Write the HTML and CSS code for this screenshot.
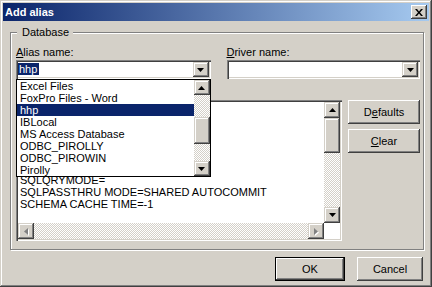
FILE: index.html
```html
<!DOCTYPE html>
<html lang="en">
<head>
  <meta charset="UTF-8">
  <title>Add alias</title>
  <link rel="stylesheet" href="styles.css">
</head>
<body>
  <div class="window">
    <div class="titlebar">
      <span class="title">Add alias</span>
      <span class="caption-btn">
        <svg width="8" height="7" viewBox="0 0 8 7"><path d="M0 0h2l2 2.4L6 0h2L5 3.5 8 7H6L4 4.6 2 7H0l3-3.5z"/></svg>
      </span>
    </div>

    <div class="client">
      <fieldset class="group">
        <legend>Database</legend>

        <div class="fields">
          <div class="field">
            <label><u>A</u>lias name:</label>
            <div class="combo">
              <div class="combo-text"><span class="sel">hhp</span></div>
              <span class="arrow-btn">
                <svg width="7" height="4" viewBox="0 0 7 4"><path d="M0 0h7L3.5 4z"/></svg>
              </span>

              <!-- открытый список алиасов -->
              <div class="dropdown">
                <ul class="items">
                  <li>Excel Files</li>
                  <li>FoxPro Files - Word</li>
                  <li class="selected">hhp</li>
                  <li>IBLocal</li>
                  <li>MS Access Database</li>
                  <li>ODBC_PIROLLY</li>
                  <li>ODBC_PIROWIN</li>
                  <li>Pirolly</li>
                </ul>
                <div class="vscroll list-scroll">
                  <span class="arrow-btn"><svg width="7" height="4" viewBox="0 0 7 4"><path d="M3.5 0 7 4H0z"/></svg></span>
                  <span class="track top"></span>
                  <span class="thumb"></span>
                  <span class="track"></span>
                  <span class="arrow-btn"><svg width="7" height="4" viewBox="0 0 7 4"><path d="M0 0h7L3.5 4z"/></svg></span>
                </div>
              </div>
            </div>
          </div>

          <div class="field">
            <label><u>D</u>river name:</label>
            <div class="combo">
              <div class="combo-text"></div>
              <span class="arrow-btn">
                <svg width="7" height="4" viewBox="0 0 7 4"><path d="M0 0h7L3.5 4z"/></svg>
              </span>
            </div>
          </div>
        </div>

        <div class="params">
          <div class="memo">
            <div class="memo-text">
              <div>&nbsp;</div>
              <div>&nbsp;</div>
              <div>&nbsp;</div>
              <div>&nbsp;</div>
              <div>&nbsp;</div>
              <div>&nbsp;</div>
              <div>SQLQRYMODE=</div>
              <div>SQLPASSTHRU MODE=SHARED AUTOCOMMIT</div>
              <div>SCHEMA CACHE TIME=-1</div>
            </div>
            <div class="vscroll memo-scroll">
              <span class="arrow-btn"><svg width="7" height="4" viewBox="0 0 7 4"><path d="M3.5 0 7 4H0z"/></svg></span>
              <span class="thumb"></span>
              <span class="track"></span>
              <span class="arrow-btn"><svg width="7" height="4" viewBox="0 0 7 4"><path d="M0 0h7L3.5 4z"/></svg></span>
            </div>
            <div class="hscroll">
              <span class="arrow-btn off"><svg width="4" height="7" viewBox="0 0 4 7"><path d="M4 0v7L0 3.5z"/></svg></span>
              <span class="track"></span>
              <span class="arrow-btn off"><svg width="4" height="7" viewBox="0 0 4 7"><path d="M0 0v7l4-3.5z"/></svg></span>
            </div>
            <div class="corner"></div>
          </div>

          <div class="side-buttons">
            <button class="btn">D<u>e</u>faults</button>
            <button class="btn"><u>C</u>lear</button>
          </div>
        </div>
      </fieldset>

      <div class="footer">
        <button class="btn ok">OK</button>
        <button class="btn cancel">Cancel</button>
      </div>
    </div>
  </div>
</body>
</html>
```

FILE: styles.css
```css
/* Диалог в стиле Windows 2000 */
body {
  margin: 0;
  background: #d4d0c8;
  font-family: "Liberation Sans", Arial, sans-serif;
  font-size: 11px;
  line-height: 12px;
  color: #000;
}
.window {
  width: 432px;
  height: 287px;
  box-sizing: border-box;
  padding: 3px;
  background: #d4d0c8;
  box-shadow: inset -1px -1px #404040, inset 1px 1px #d4d0c8,
              inset -2px -2px #808080, inset 2px 2px #fff;
}
.titlebar {
  height: 18px;
  display: flex;
  align-items: center;
  justify-content: space-between;
  padding: 0 2px;
  background: linear-gradient(to right, #0a246a, #a6caf0);
  color: #fff;
  font-weight: bold;
}
.caption-btn {
  width: 16px;
  height: 14px;
  display: flex;
  align-items: center;
  justify-content: center;
  background: #d4d0c8;
  box-shadow: inset -1px -1px #404040, inset 1px 1px #fff, inset -2px -2px #808080;
}

.client {
  padding-left: 7px;
}
.group {
  width: 414px;
  box-sizing: border-box;
  margin: 5px 0 0 0;
  padding: 8px 3px 8px 5px;
  border: 1px solid #808080;
  box-shadow: inset 1px 1px #fff, 1px 1px #fff;
  min-width: 0;
}
.group legend {
  margin-left: 1px;
  padding: 0 4px 0 5px;
  background: #d4d0c8;
}

.fields {
  display: flex;
  gap: 16px;
}
.field {
  display: flex;
  flex-direction: column;
  gap: 2px;
}
.field:first-child { width: 195px; }
.field:last-child { width: 194px; }

.combo {
  position: relative;
  height: 19px;
  box-sizing: border-box;
  padding: 2px;
  display: flex;
  background: #fff;
  box-shadow: inset 1px 1px #808080, inset 2px 2px #404040,
              inset -1px -1px #fff, inset -2px -2px #d4d0c8;
}
.combo-text {
  flex: 1;
  padding-top: 1px;
}
.sel {
  display: inline-block;
  padding: 0 2px 0 1px;
  background: #0a246a;
  color: #fff;
}

.arrow-btn {
  width: 16px;
  height: 16px;
  flex: none;
  display: flex;
  align-items: center;
  justify-content: center;
  background: #d4d0c8;
  box-shadow: inset -1px -1px #404040, inset 1px 1px #d4d0c8,
              inset -2px -2px #808080, inset 2px 2px #fff;
}
.combo .arrow-btn {
  height: 15px;
}
.arrow-btn.off svg {
  fill: #808080;
  filter: drop-shadow(1px 1px 0 #fff);
}

.dropdown {
  position: absolute;
  left: 0;
  top: 100%;
  width: 100%;
  box-sizing: border-box;
  border: 1px solid #000;
  background: #fff;
  display: flex;
  z-index: 2;
}
.items {
  flex: 1;
  margin: 0;
  padding: 0;
  list-style: none;
}
.items li {
  height: 12px;
  padding-left: 3px;
  white-space: nowrap;
}
.items li.selected {
  background: #0a246a;
  color: #fff;
}

.vscroll {
  width: 16px;
  display: flex;
  flex-direction: column;
}
.track {
  flex: 1;
  background: conic-gradient(#fff 25%, #d4d0c8 0 50%, #fff 0 75%, #d4d0c8 0) 0 0 / 2px 2px;
}
.list-scroll .track.top {
  flex: none;
  height: 22px;
}
.thumb {
  height: 27px;
  background: #d4d0c8;
  box-shadow: inset -1px -1px #404040, inset 1px 1px #d4d0c8,
              inset -2px -2px #808080, inset 2px 2px #fff;
}
.memo-scroll .thumb {
  height: 35px;
}

.params {
  display: flex;
  gap: 6px;
  margin-top: 21px;
}
.memo {
  width: 327px;
  height: 141px;
  box-sizing: border-box;
  padding: 2px;
  background: #fff;
  display: grid;
  grid-template-columns: 1fr 16px;
  grid-template-rows: 1fr 16px;
  box-shadow: inset 1px 1px #808080, inset 2px 2px #404040,
              inset -1px -1px #fff, inset -2px -2px #d4d0c8;
}
.memo-text {
  padding-left: 2px;
  white-space: nowrap;
  overflow: hidden;
}
.hscroll {
  display: flex;
}
.corner {
  background: #fff;
}

.side-buttons {
  display: flex;
  flex-direction: column;
  gap: 5px;
}
.btn {
  width: 72px;
  height: 24px;
  padding: 0;
  border: none;
  background: #d4d0c8;
  font: inherit;
  color: #000;
  box-shadow: inset -1px -1px #404040, inset 1px 1px #fff,
              inset -2px -2px #808080, inset 2px 2px #d4d0c8;
}

.footer {
  display: flex;
  justify-content: flex-end;
  gap: 12px;
  margin-top: 7px;
  padding-right: 6px;
}
.btn.ok {
  width: 70px;
  border: 1px solid #000;
}
.btn.cancel {
  width: 66px;
}
```
